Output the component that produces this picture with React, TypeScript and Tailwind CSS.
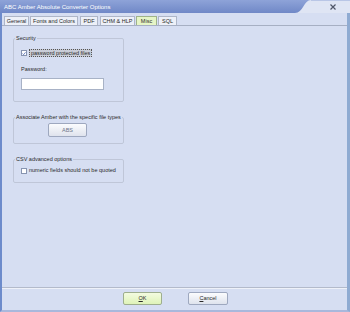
import React from "react";

const font = { fontFamily: '"Liberation Sans", Arial, sans-serif' };

function Tab({ label, w, ml, active }: { label: string; w: string; ml: string; active?: boolean }) {
  return (
    <div
      className={`${w} ${ml} h-[9px] flex items-center justify-center border border-b-0 text-[5.5px] leading-[7px] text-[#2a2a2a] ${
        active ? "bg-[#e6f5c6] border-[#9fb38a]" : "bg-[#edf0f8] border-[#aeb6c8]"
      }`}
    >
      {label}
    </div>
  );
}

function CheckBox({ checked }: { checked?: boolean }) {
  return (
    <div className="w-[6px] h-[6px] bg-white border border-[#8794b0] flex items-center justify-center shrink-0">
      {checked && (
        <svg width="5" height="5" viewBox="0 0 5 5">
          <path d="M0.6 2.6 L2 4 L4.4 1" stroke="#3a5bb0" strokeWidth="0.9" fill="none" />
        </svg>
      )}
    </div>
  );
}

export default function App() {
  return (
    <div className="w-[350px] h-[312px] flex flex-col bg-[#d6def2] overflow-hidden" style={font}>
      {/* title bar */}
      <div className="h-[13px] flex shrink-0">
        <div className="w-[295px] bg-gradient-to-b from-[#8ea3d8] to-[#7088c7] flex items-center pl-[4px]">
          <span className="text-[6px] leading-[8px] text-white">ABC Amber Absolute Converter Options</span>
        </div>
        <svg width="16" height="13" viewBox="0 0 16 13" className="shrink-0 bg-[#dfe5f4]">
          <defs>
            <linearGradient id="tg" x1="0" y1="0" x2="0" y2="1">
              <stop offset="0" stopColor="#8ea3d8" />
              <stop offset="1" stopColor="#7088c7" />
            </linearGradient>
          </defs>
          <path d="M0 0 H16 C9 0 8 13 0 13 Z" fill="url(#tg)" />
        </svg>
        <div className="flex-1 bg-[#dfe5f4] border-t border-[#b9c6e6] flex items-center justify-end pr-[14px]">
          <svg width="6" height="6" viewBox="0 0 6 6">
            <path d="M0.5 0.5 L5.5 5.5 M5.5 0.5 L0.5 5.5" stroke="#4f5668" strokeWidth="1.2" />
          </svg>
        </div>
      </div>

      {/* body */}
      <div className="flex-1 flex flex-col border-l-2 border-l-[#6d8bcb] border-r-[3px] border-r-[#8fabd2] border-b-2 border-b-[#a9b8dc]">
        {/* tabs */}
        <div className="flex pt-[3px] border-b border-[#a6afc3] shrink-0">
          <Tab label="General" w="w-[25px]" ml="ml-[2px]" />
          <Tab label="Fonts and Colors" w="w-[48px]" ml="ml-[1px]" />
          <Tab label="PDF" w="w-[18px]" ml="ml-[2px]" />
          <Tab label="CHM & HLP" w="w-[35px]" ml="ml-[2px]" />
          <Tab label="Misc" w="w-[21px]" ml="ml-[1px]" active />
          <Tab label="SQL" w="w-[19px]" ml="ml-[1px]" />
        </div>

        {/* content */}
        <div className="flex-1 flex flex-col pl-[11px] pt-[9px] border-b border-[#b3bacb] text-[5.5px] leading-[7px] text-[#2a2a2a]">
          <fieldset className="w-[111px] h-[67px] border border-[#bfc6d8] rounded-[2px] px-[7px]">
            <legend className="ml-[-6px] px-[1px]">Security</legend>
            <div className="flex items-center gap-[2px] mt-[7px]">
              <CheckBox checked />
              <span className="bg-[#c9cdd8] border border-dotted border-[#555] px-[1px] leading-[6px]">password protected files</span>
            </div>
            <div className="mt-[9px]">Password:</div>
            <div className="mt-[5px] w-[83px] h-[12px] bg-white border border-[#a8b2c6]" />
          </fieldset>

          <fieldset className="w-[111px] h-[30px] mt-[12px] border border-[#bfc6d8] rounded-[2px]">
            <legend className="ml-[1px] px-[1px]">Associate Amber with the specific file types</legend>
            <div className="flex justify-center pr-[2px] mt-[2px]">
              <div className="w-[39px] h-[14px] rounded-[2px] border border-[#9ea8bf] bg-gradient-to-b from-[#fbfcfe] to-[#dfe3ed] flex items-center justify-center text-[#6b7288]">
                ABS
              </div>
            </div>
          </fieldset>

          <fieldset className="w-[111px] h-[27px] mt-[12px] border border-[#bfc6d8] rounded-[2px] px-[7px]">
            <legend className="ml-[-6px] px-[1px]">CSV advanced options</legend>
            <div className="flex items-center gap-[2px] mt-[4px]">
              <CheckBox />
              <span>numeric fields should not be quoted</span>
            </div>
          </fieldset>
        </div>

        {/* buttons */}
        <div className="h-[22px] shrink-0 border-t border-[#eef1f9] flex items-start justify-center gap-[26px] pt-[3px] pl-[2px] text-[5.5px] leading-[7px] text-[#2a2a2a]">
          <div className="w-[39px] h-[13px] rounded-[2px] border border-[#9eae8e] bg-gradient-to-b from-[#f3fbe0] to-[#dff3b8] flex items-center justify-center">
            <span><span className="underline">O</span>K</span>
          </div>
          <div className="w-[40px] h-[13px] rounded-[2px] border border-[#9ea8bf] bg-gradient-to-b from-[#fbfcfe] to-[#dfe3ed] flex items-center justify-center">
            <span><span className="underline">C</span>ancel</span>
          </div>
        </div>
      </div>
    </div>
  );
}
